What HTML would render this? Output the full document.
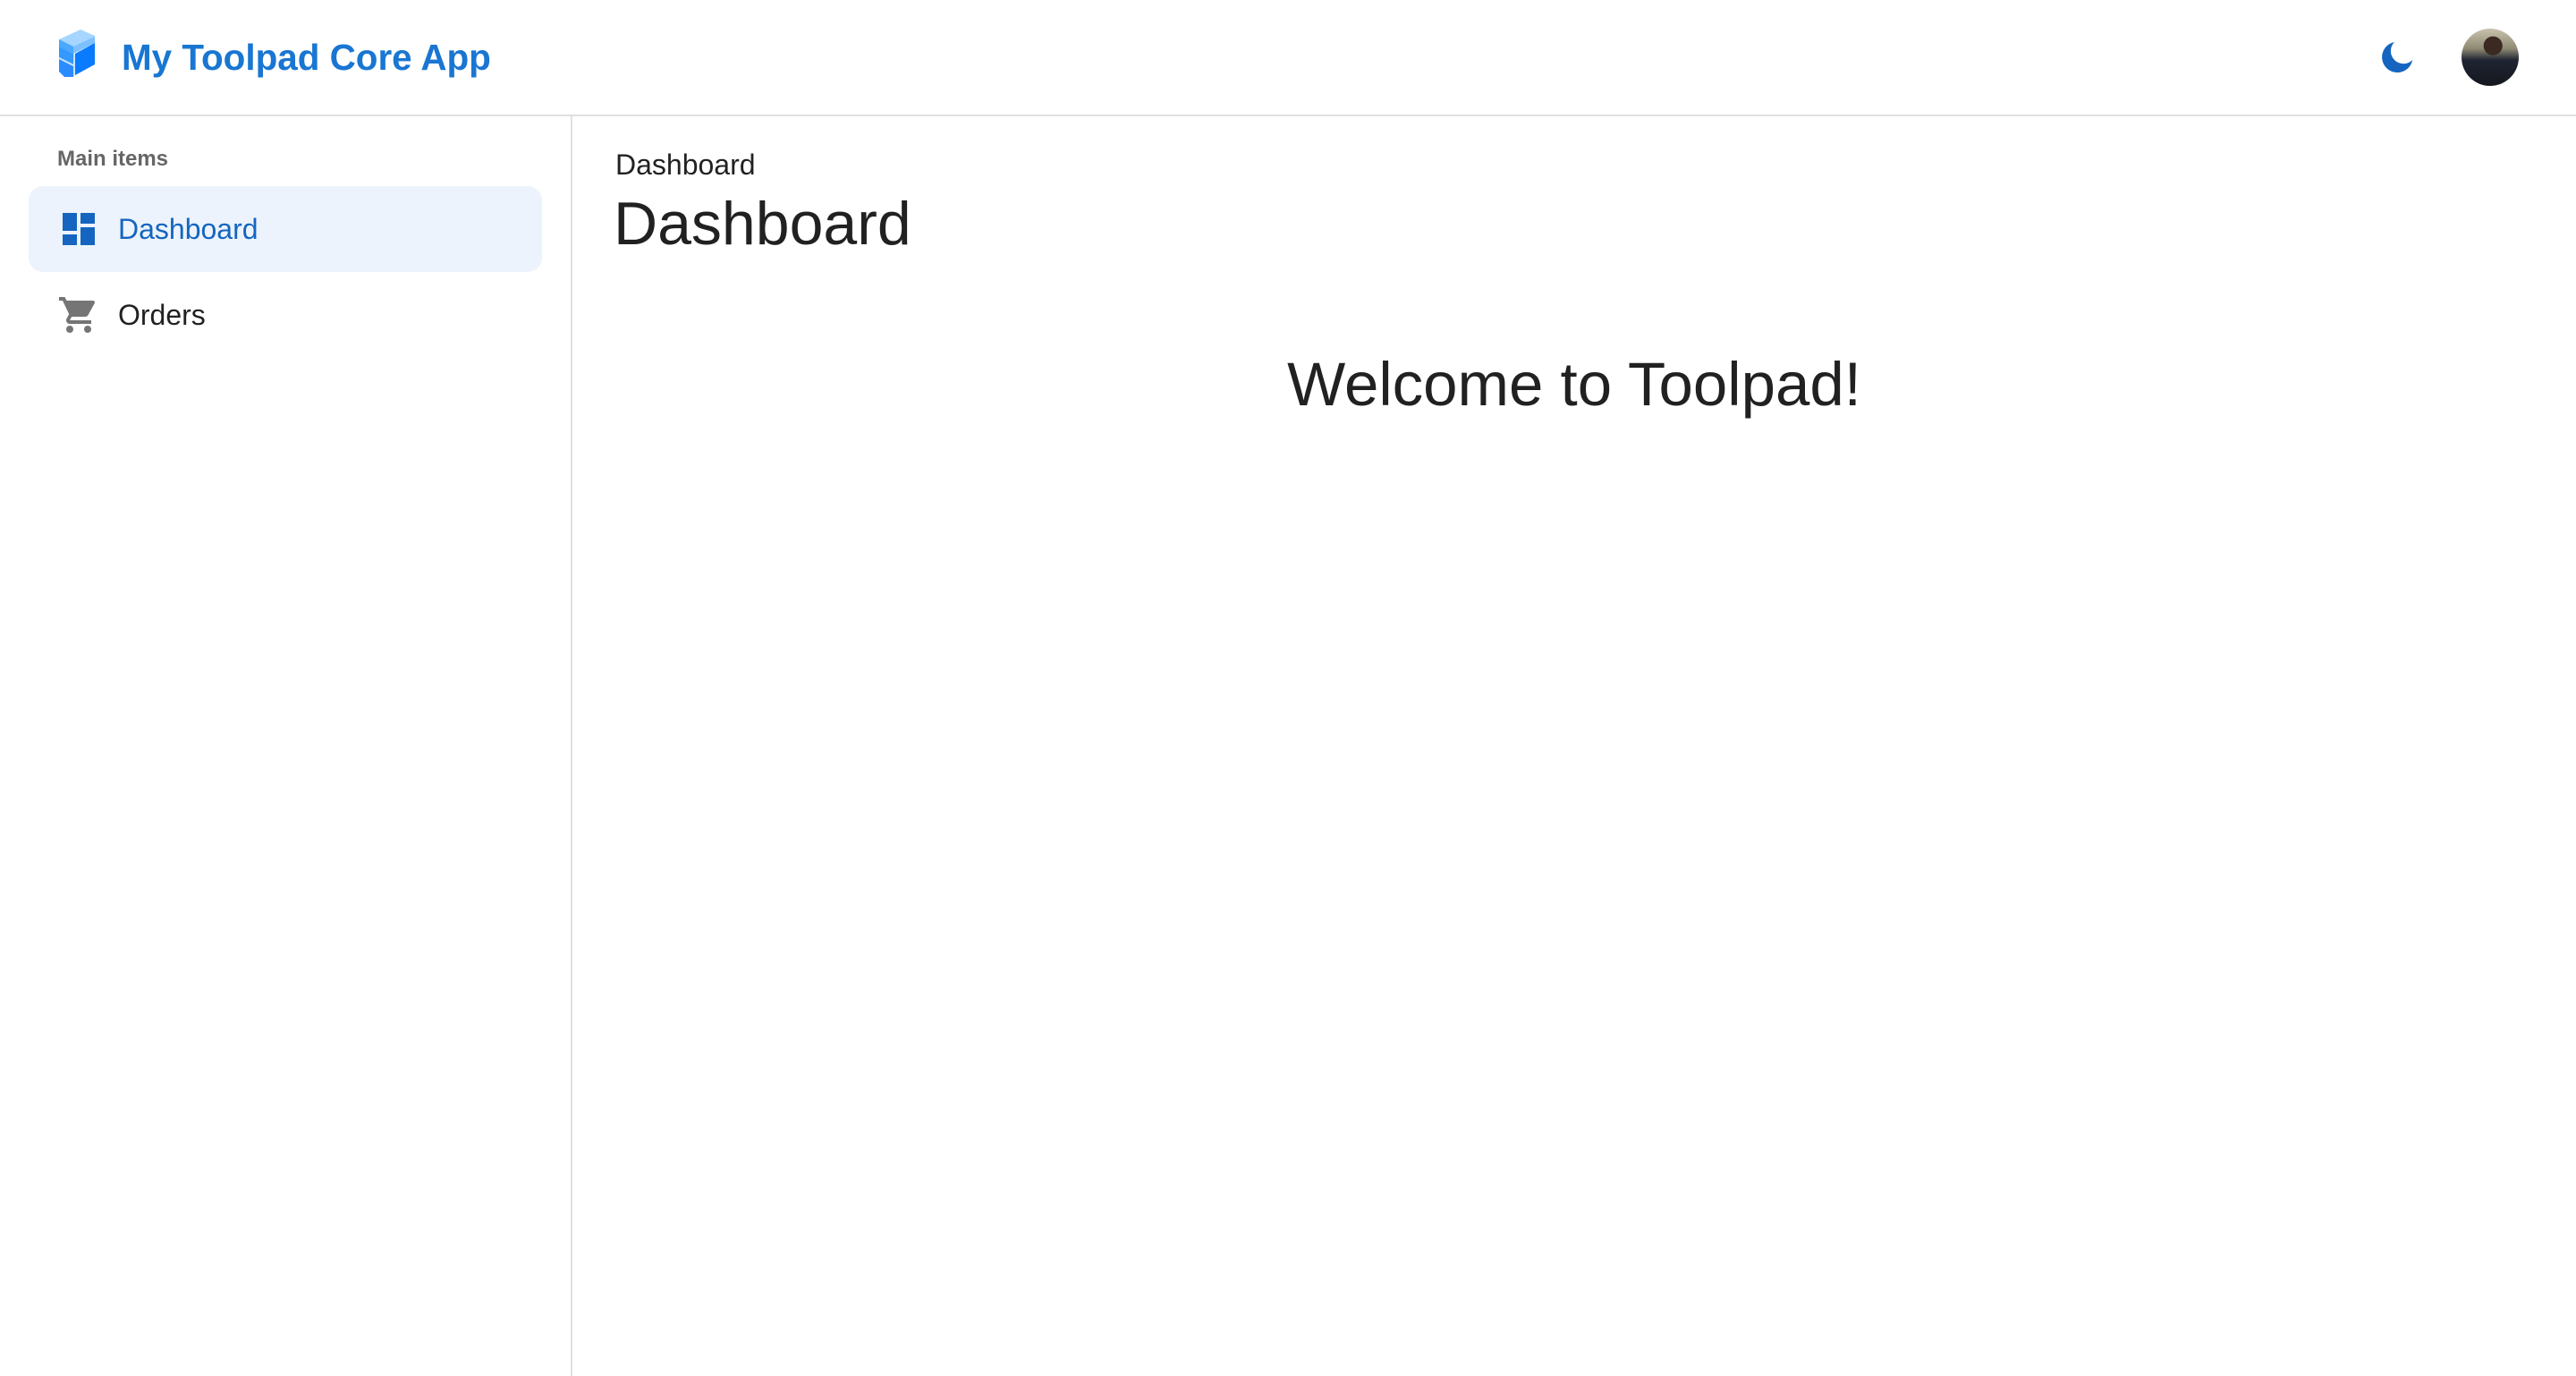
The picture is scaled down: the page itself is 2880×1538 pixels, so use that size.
<!DOCTYPE html>
<html><head><meta charset="utf-8"><style>
html{zoom:2}
body{margin:0;width:1440px;height:768px;background:#fff;font-family:"Liberation Sans",Arial,sans-serif;position:relative;overflow:hidden;color:rgba(0,0,0,0.87)}
.hdr{position:absolute;left:0;top:0;width:1440px;height:64px;border-bottom:1px solid #e0e0e0}
.logo{position:absolute;left:31px;top:16px}
.title{position:absolute;left:68px;top:19px;font-size:20.2px;font-weight:700;color:#1976d2;line-height:26px}
.side{position:absolute;left:0;top:65px;width:319px;height:704px;border-right:1px solid #e0e0e0}
.sub{position:absolute;left:32px;top:17px;font-size:12px;font-weight:700;color:#666}
.item{position:absolute;left:16px;width:287px;height:48px;border-radius:8px}
.item.sel{background:#ecf3fc;top:39px}
.item span{position:absolute;left:50px;top:14px;font-size:16px;line-height:20px}
.item svg{position:absolute;left:16px;top:12px}
.bc{position:absolute;left:344px;top:82px;font-size:16px;line-height:20px}
.h{position:absolute;left:343px;top:105px;font-size:34px;line-height:40px}
.wel{position:absolute;left:320px;width:1120px;text-align:center;top:195px;font-size:34.5px;line-height:40px}
</style></head><body>
<div class="hdr">
<svg class="logo" width="24" height="28" viewBox="0 0 24 28">
<path d="M2 6 L14 0.5 L22 4 L22 8 L10 14 L2 10 Z" fill="#a6d6ff"/>
<path d="M2 6 L10 10 L10 14 L2 10Z" fill="#4aa8ff"/>
<path d="M10 10 L22 4.5 L22 8 L10 14Z" fill="#7cc0ff"/>
<path d="M2 10 L10 14 L10 20 L2 16Z" fill="#3399ff"/>
<path d="M2 17 L10 21 L10 27 L5 27 L2 24Z" fill="#2b8cff"/>
<path d="M11 14 L22 8 L22 20 L11 26Z" fill="#0a7aff"/>
<path d="M10 14 L11 14 L11 26 L10 27Z" fill="#c9e4ff"/>
<path d="M2 16 L10 20 L10 21 L2 17Z" fill="#c9e4ff"/>
</svg>
<div class="title">My Toolpad Core App</div>
<svg style="position:absolute;left:1330px;top:22px" width="20" height="20" viewBox="0 0 20 20"><path d="M8.5 1.5 A8.6 8.6 0 1 0 18.6 11.5 A5.3 5.3 0 1 1 8.5 1.5Z" fill="#1565c0"/></svg>
<div style="position:absolute;left:1376px;top:16px;width:32px;height:32px;border-radius:50%;background:radial-gradient(circle at 55% 30%,#3a2a22 0 18%,transparent 19%),linear-gradient(180deg,#c9c2ad 0%,#8e8a74 35%,#1f2433 55%,#15171d 100%)"></div>
</div>
<div class="side">
<div class="sub">Main items</div>
<div class="item sel"><svg width="24" height="24" viewBox="0 0 24 24"><path d="M3 13h8V3H3zm0 8h8v-6H3zm10 0h8V11h-8zm0-18v6h8V3z" fill="#1565c0"/></svg><span style="color:#1565c0">Dashboard</span></div>
<div class="item" style="top:87px"><svg width="24" height="24" viewBox="0 0 24 24"><path d="M7 18c-1.1 0-1.99.9-1.99 2S5.9 22 7 22s2-.9 2-2-.9-2-2-2M1 2v2h2l3.6 7.59-1.35 2.45c-.16.28-.25.61-.25.96 0 1.1.9 2 2 2h12v-2H7.42c-.14 0-.25-.11-.25-.25l.03-.12.9-1.63h7.450c.75 0 1.41-.41 1.75-1.03l3.58-6.49c.08-.14.12-.31.12-.48 0-.55-.45-1-1-1H5.21l-.94-2zm16 16c-1.1 0-1.99.9-1.99 2s.89 2 1.99 2 2-.9 2-2-.9-2-2-2" fill="#757575"/></svg><span>Orders</span></div>
</div>
<div class="bc">Dashboard</div>
<div class="h">Dashboard</div>
<div class="wel">Welcome to Toolpad!</div>
</body></html>
